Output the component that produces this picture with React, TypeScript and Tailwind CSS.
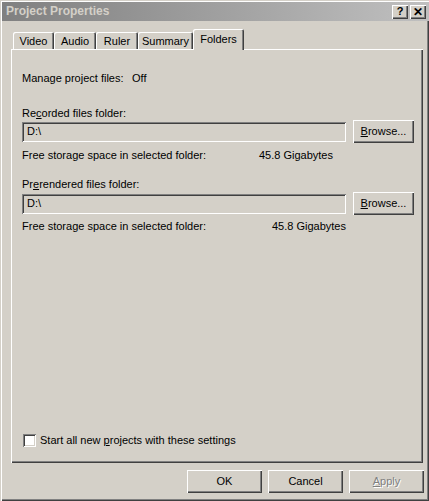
import { useState } from "react";

const TABS = [
  { label: "Video", w: "w-[41px]" },
  { label: "Audio", w: "w-[42px]" },
  { label: "Ruler", w: "w-[42px]" },
  { label: "Summary", w: "w-[55px]" },
];

function Raised({ className = "", children }: { className?: string; children: React.ReactNode }) {
  return (
    <div
      className={`flex items-center justify-center bg-[#d4d0c8] shadow-[inset_1px_1px_#ffffff,inset_-1px_-1px_#404040,inset_-2px_-2px_#808080] ${className}`}
    >
      {children}
    </div>
  );
}

function FolderField() {
  return (
    <div className="flex h-[23px] items-center">
      <div className="ml-[11px] flex h-[20px] w-[324px] items-center bg-[#d4d0c8] pl-[5px] shadow-[inset_1px_1px_#808080,inset_-1px_-1px_#ffffff,inset_2px_2px_#404040,inset_-2px_-2px_#d4d0c8]">
        D:\
      </div>
      <Raised className="ml-[7px] h-[23px] w-[61px]">
        <span>
          <span className="underline">B</span>rowse...
        </span>
      </Raised>
    </div>
  );
}

export default function App() {
  const [startAll, setStartAll] = useState(false);

  return (
    <div className="h-[501px] w-[429px] overflow-hidden bg-[#d4d0c8] pl-[2px] pt-[2px] text-[11px] leading-[13px] text-black shadow-[inset_1px_1px_#d4d0c8,inset_2px_2px_#ffffff,inset_-1px_-1px_#404040,inset_-2px_-2px_#808080] [font-family:'Liberation_Sans',Arial,sans-serif]">
      {/* Title bar (inactive) */}
      <div className="flex h-[19px] items-center bg-gradient-to-r from-[#808080] to-[#c0c0c0] pl-[4px] pr-[3px]">
        <span className="text-[12px] font-bold text-[#d4d0c8]">Project Properties</span>
        <div className="ml-auto flex gap-[2px]">
          <Raised className="h-[14px] w-[16px] text-[11px] font-bold leading-none">?</Raised>
          <Raised className="h-[14px] w-[16px] text-[12px] font-bold leading-none">✕</Raised>
        </div>
      </div>

      {/* Tabs */}
      <div className="ml-[9px] mt-[8px] flex h-[20px] items-end pl-[2px]">
        {TABS.map((t) => (
          <div
            key={t.label}
            className={`${t.w} flex h-[17px] items-center justify-center rounded-t-[2px] bg-[#d4d0c8] pt-[1px] shadow-[inset_1px_1px_#ffffff,inset_-1px_0_#404040,inset_-2px_0_#808080]`}
          >
            {t.label}
          </div>
        ))}
        <div className="relative z-10 -mb-[1px] flex h-[21px] w-[51px] items-start justify-center rounded-t-[2px] bg-[#d4d0c8] pt-[4px] shadow-[inset_1px_1px_#ffffff,inset_-1px_0_#404040,inset_-2px_0_#808080]">
          Folders
        </div>
      </div>

      {/* Panel */}
      <div className="ml-[9px] flex h-[414px] w-[412px] flex-col shadow-[inset_1px_1px_#ffffff,inset_-1px_-1px_#404040,inset_-2px_-2px_#808080]">
        <div className="mt-[23px] flex h-[13px]">
          <span className="ml-[11px] w-[110px]">Manage project files:</span>
          <span>Off</span>
        </div>

        <div className="ml-[11px] mt-[22px] h-[13px]">
          Re<span className="underline">c</span>orded files folder:
        </div>
        <FolderField />
        <div className="mt-[6px] flex h-[13px]">
          <span className="ml-[11px] w-[237px]">Free storage space in selected folder:</span>
          <span>45.8 Gigabytes</span>
        </div>

        <div className="ml-[11px] mt-[16px] h-[13px]">
          Pr<span className="underline">e</span>rendered files folder:
        </div>
        <div className="mt-[1px]">
          <FolderField />
        </div>
        <div className="mt-[5px] flex h-[13px]">
          <span className="ml-[11px] w-[250px]">Free storage space in selected folder:</span>
          <span>45.8 Gigabytes</span>
        </div>

        <label className="mb-[16px] ml-[12px] mt-auto flex h-[13px] items-center">
          <input
            type="checkbox"
            checked={startAll}
            onChange={(e) => setStartAll(e.target.checked)}
            className="h-[13px] w-[13px] appearance-none bg-white shadow-[inset_1px_1px_#808080,inset_-1px_-1px_#ffffff,inset_2px_2px_#404040,inset_-2px_-2px_#d4d0c8]"
          />
          <span className="ml-[4px]">
            Start all new <span className="underline">p</span>rojects with these settings
          </span>
        </label>
      </div>

      {/* Buttons */}
      <div className="mt-[7px] flex gap-[6px] pl-[185px]">
        <Raised className="h-[23px] w-[75px]">OK</Raised>
        <Raised className="h-[23px] w-[75px]">Cancel</Raised>
        <Raised className="h-[23px] w-[75px] text-[#808080] [text-shadow:1px_1px_#ffffff]">
          <span>
            <span className="underline">A</span>pply
          </span>
        </Raised>
      </div>
    </div>
  );
}
